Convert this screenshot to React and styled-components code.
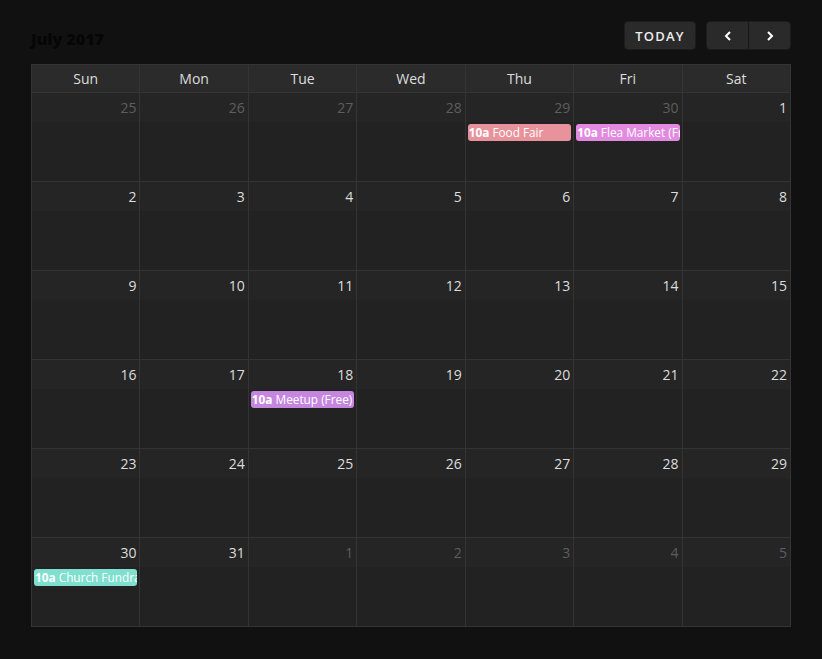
import React from "react";
import styled, { createGlobalStyle } from "styled-components";

const GlobalStyle = createGlobalStyle`
  html, body {
    margin: 0;
    padding: 0;
    background: #111111;
  }
  body {
    font-family: "Open Sans", "Liberation Sans", sans-serif;
  }
`;

const DAYS = ["Sun", "Mon", "Tue", "Wed", "Thu", "Fri", "Sat"];

// week rows, dim = outside the month
const WEEKS = [
  [25, 26, 27, 28, 29, 30, 1].map((d, i) => ({ d, dim: i < 6 })),
  [2, 3, 4, 5, 6, 7, 8].map((d) => ({ d })),
  [9, 10, 11, 12, 13, 14, 15].map((d) => ({ d })),
  [16, 17, 18, 19, 20, 21, 22].map((d) => ({ d })),
  [23, 24, 25, 26, 27, 28, 29].map((d) => ({ d })),
  [30, 31, 1, 2, 3, 4, 5].map((d, i) => ({ d, dim: i > 1 })),
];

const EVENTS = {
  "0-4": { title: "Food Fair", color: "#e8929b" },
  "0-5": { title: "Flea Market (Free)", color: "#e28ae0" },
  "3-2": { title: "Meetup (Free)", color: "#c586e0" },
  "5-0": { title: "Church Fundraiser", color: "#7fe0d0" },
};

const App = () => {
  return (
    <Page>
      <GlobalStyle />
      <Toolbar>
        <Title>July 2017</Title>
        <Controls>
          <Button>TODAY</Button>
          <NavGroup>
            <NavButton>
              <svg width="12" height="12" viewBox="0 0 12 12">
                <polyline points="8,2 4,6 8,10" fill="none" stroke="#fff" strokeWidth="2" />
              </svg>
            </NavButton>
            <NavButton>
              <svg width="12" height="12" viewBox="0 0 12 12">
                <polyline points="4,2 8,6 4,10" fill="none" stroke="#fff" strokeWidth="2" />
              </svg>
            </NavButton>
          </NavGroup>
        </Controls>
      </Toolbar>
      <Calendar>
        {DAYS.map((d) => (
          <HeadCell key={d}>{d}</HeadCell>
        ))}
        {WEEKS.map((week, r) =>
          week.map((c, i) => {
            const ev = EVENTS[`${r}-${i}`];
            return (
              <DayCell key={`${r}-${i}`}>
                <DayNum $dim={c.dim}>{c.d}</DayNum>
                {ev && (
                  <Event $color={ev.color}>
                    <b>10a</b> {ev.title}
                  </Event>
                )}
              </DayCell>
            );
          })
        )}
      </Calendar>
    </Page>
  );
};

const Page = styled.div`
  padding: 21px 31px 32px 31px;
`;

const Toolbar = styled.div`
  display: flex;
  justify-content: space-between;
  align-items: flex-start;
  height: 29px;
  margin-bottom: 14px;
`;

const Title = styled.h2`
  margin: 7px 0 0 0;
  font-size: 16px;
  font-weight: 800;
  color: #060606;
  line-height: 22px;
`;

const Controls = styled.div`
  display: flex;
  gap: 10px;
`;

const Button = styled.div`
  height: 29px;
  width: 72px;
  box-sizing: border-box;
  display: flex;
  align-items: center;
  justify-content: center;
  background: #2a2a2a;
  border: 1px solid #1c1c1c;
  border-radius: 4px;
  color: #eeeeee;
  font-family: "Open Sans", "Liberation Sans", sans-serif;
  font-weight: 600;
  font-size: 13px;
  letter-spacing: 1.2px;
`;

const NavGroup = styled.div`
  display: flex;
  border-radius: 4px;
  overflow: hidden;
  border: 1px solid #1c1c1c;
`;

const NavButton = styled.div`
  width: 41px;
  height: 27px;
  display: flex;
  align-items: center;
  justify-content: center;
  background: #2a2a2a;
  & + & {
    border-left: 1px solid #1a1a1a;
  }
`;

const Calendar = styled.div`
  display: grid;
  grid-template-columns: repeat(7, 1fr);
  grid-template-rows: 28px repeat(6, 89px);
  border-top: 1px solid #343434;
  border-left: 1px solid #343434;
  background: #222222;
`;

const HeadCell = styled.div`
  background: #2b2b2b;
  border-right: 1px solid #343434;
  border-bottom: 1px solid #343434;
  color: #dddddd;
  font-size: 14px;
  display: flex;
  align-items: center;
  justify-content: center;
`;

const DayCell = styled.div`
  border-right: 1px solid #343434;
  border-bottom: 1px solid #343434;
  background: #222222;
  display: flex;
  flex-direction: column;
  min-width: 0;
  overflow: hidden;
`;

const DayNum = styled.div`
  height: 29px;
  background: #252525;
  text-align: right;
  padding-right: 3px;
  font-size: 14px;
  line-height: 30px;
  color: ${(p) => (p.$dim ? "#5e5e5e" : "#dddddd")};
`;

const Event = styled.div`
  margin: 2px 2px 0 2px;
  height: 17px;
  line-height: 17px;
  border-radius: 3px;
  background: ${(p) => p.$color};
  color: #ffffff;
  font-size: 11.8px;
  padding-left: 1px;
  white-space: nowrap;
  overflow: hidden;
  b {
    font-weight: 700;
  }
`;

export default App;
